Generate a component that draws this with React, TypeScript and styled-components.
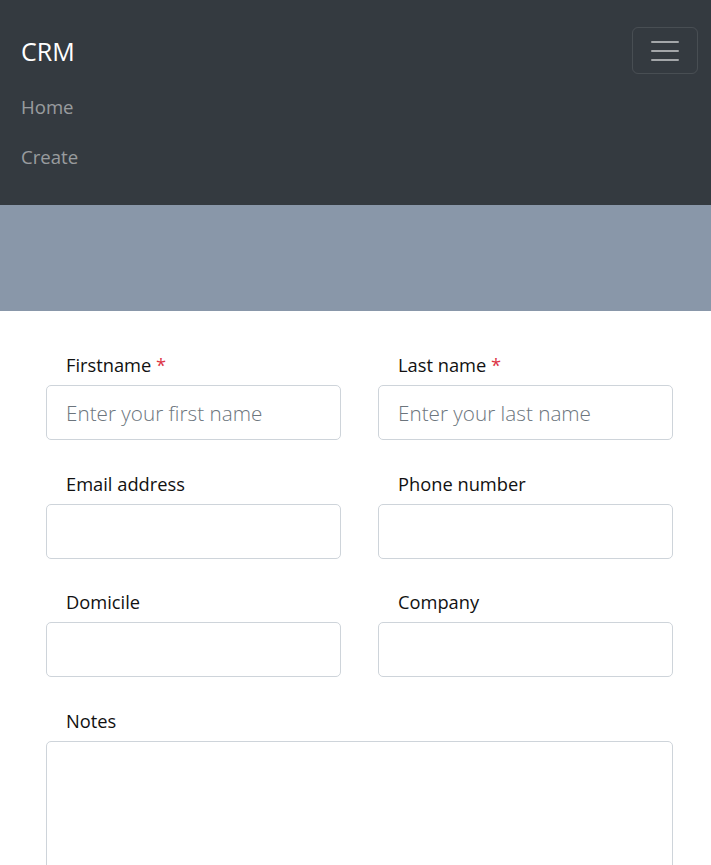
import React from "react";
import styled, { createGlobalStyle } from "styled-components";

const GlobalStyle = createGlobalStyle`
  html, body {
    margin: 0;
    padding: 0;
    background: #fff;
  }
  body {
    font-family: "Open Sans", "Noto Sans", "Liberation Sans", sans-serif;
    font-size: 18.3px;
    line-height: 1.5;
    color: #212529;
  }
  * {
    box-sizing: border-box;
  }
`;

const Navbar = styled.nav`
  background: #343a40;
  padding: 27px 13px 24px 21px;
`;

const NavHeader = styled.div`
  display: flex;
  align-items: center;
  justify-content: space-between;
  height: 47px;
`;

const Brand = styled.a`
  color: #fff;
  font-size: 25px;
  line-height: 1.5;
  text-decoration: none;
  margin-top: 3px;
`;

const Toggler = styled.button`
  width: 66px;
  height: 47px;
  background: transparent;
  border: 1px solid rgba(255, 255, 255, 0.1);
  border-radius: 6px;
  display: flex;
  align-items: center;
  justify-content: center;
  padding: 0;
`;

const NavList = styled.ul`
  list-style: none;
  margin: 7px 0 0;
  padding: 0;
`;

const NavLink = styled.a`
  display: block;
  padding: 11.5px 0;
  line-height: 27px;
  font-size: 18.6px;
  color: rgba(255, 255, 255, 0.5);
  text-decoration: none;
`;

const Banner = styled.div`
  height: 106px;
  background: #8997a9;
`;

const Form = styled.form`
  display: grid;
  grid-template-columns: 295px 295px;
  column-gap: 37px;
  padding: 40px 0 0 46px;
`;

const Group = styled.div<{ $wide?: boolean }>`
  display: flex;
  flex-direction: column;
  margin-bottom: 29.7px;
  ${(p) => (p.$wide ? "grid-column: 1 / -1;" : "")}
`;

const Label = styled.label`
  display: block;
  padding-left: 20px;
  line-height: 27px;
  margin-bottom: 7px;
  color: #111;
`;

const Required = styled.span`
  color: #dc3545;
`;

const Input = styled.input`
  height: 55px;
  width: 100%;
  border: 1px solid #ced4da;
  border-radius: 5px;
  padding: 0 19px;
  font-family: inherit;
  font-size: 20.7px;
  font-weight: 300;
  color: #495057;
  background: #fff;
  &::placeholder {
    color: #6c757d;
  }
`;

const TextArea = styled.textarea`
  height: 160px;
  width: 100%;
  border: 1px solid #ced4da;
  border-radius: 5px;
  padding: 10px 19px;
  font-family: inherit;
  font-size: 20px;
  resize: vertical;
`;

const Hamburger = () => (
  <svg width="30" height="30" viewBox="0 0 30 30">
    <path
      d="M2 8.5h26M2 17.5h26M2 26.5h26"
      stroke="rgba(255,255,255,0.55)"
      strokeWidth="2"
      strokeLinecap="round"
      transform="translate(0 -2.5)"
    />
  </svg>
);

type FieldProps = {
  label: string;
  required?: boolean;
  placeholder?: string;
};

const Field = ({ label, required, placeholder }: FieldProps) => (
  <Group>
    <Label>
      {label} {required && <Required>*</Required>}
    </Label>
    <Input placeholder={placeholder} />
  </Group>
);

export default function App() {
  return (
    <>
      <GlobalStyle />
      <Navbar>
        <NavHeader>
          <Brand href="#">CRM</Brand>
          <Toggler type="button" aria-label="Toggle navigation">
            <Hamburger />
          </Toggler>
        </NavHeader>
        <NavList>
          <li>
            <NavLink href="#">Home</NavLink>
          </li>
          <li>
            <NavLink href="#">Create</NavLink>
          </li>
        </NavList>
      </Navbar>
      <Banner />
      <Form>
        <Field label="Firstname" required placeholder="Enter your first name" />
        <Field label="Last name" required placeholder="Enter your last name" />
        <Field label="Email address" />
        <Field label="Phone number" />
        <Field label="Domicile" />
        <Field label="Company" />
        <Group $wide>
          <Label>Notes</Label>
          <TextArea />
        </Group>
      </Form>
    </>
  );
}
